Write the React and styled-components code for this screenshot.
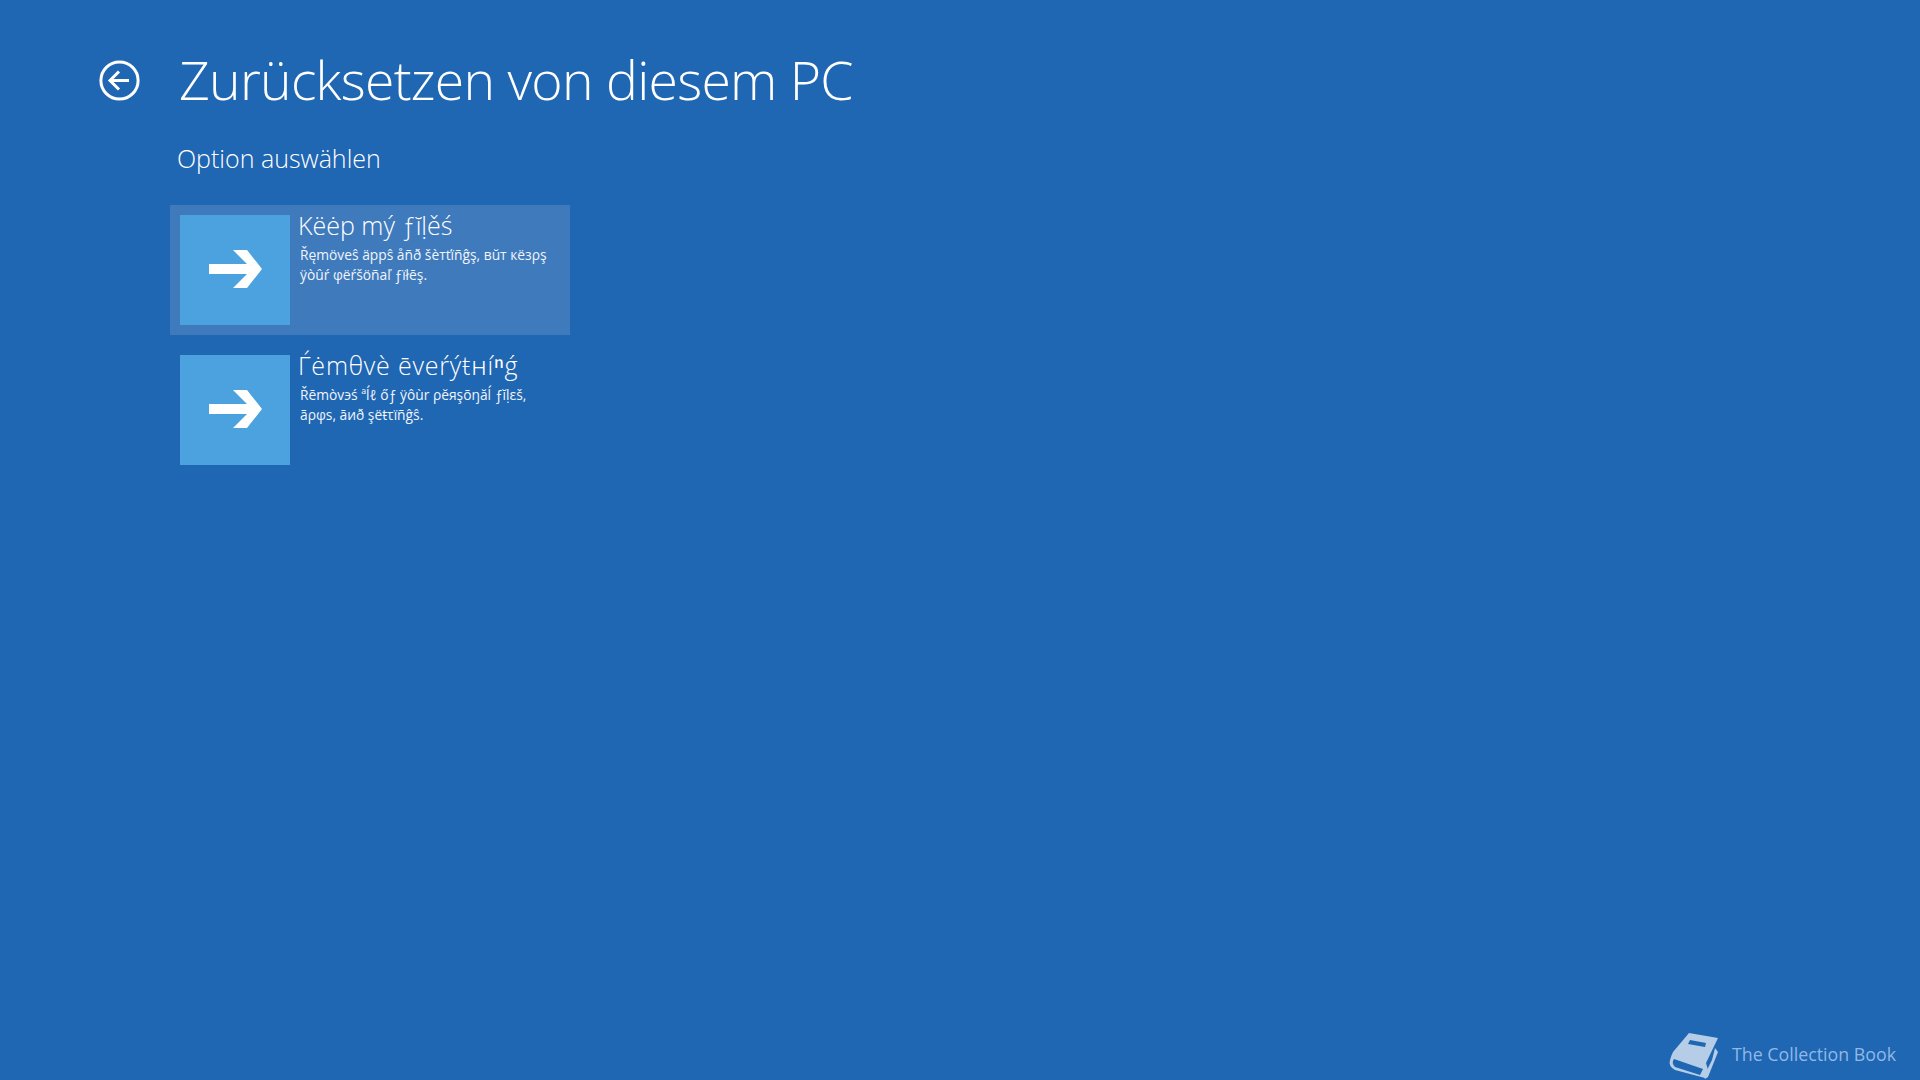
import React from "react";
import styled, { createGlobalStyle } from "styled-components";

const Global = createGlobalStyle`
  html, body { margin: 0; padding: 0; height: 100%; background: #1f66b3; }
  #root { height: 100%; }
  * { box-sizing: border-box; }
`;

const Screen = styled.div`
  position: relative;
  width: 1920px;
  height: 1080px;
  overflow: hidden;
  background: #1f66b3;
  color: #fff;
  font-family: "Open Sans", "Noto Sans", "DejaVu Sans", sans-serif;
  padding: 41px 0 0 170px;
`;

const Header = styled.header`
  display: flex;
  align-items: center;
  height: 78px;
  margin-left: -71px;
  gap: 39px;
`;

const BackButton = styled.div`
  width: 41px;
  height: 41px;
  flex: none;
  svg { display: block; }
`;

const Title = styled.h1`
  margin: 0;
  font-size: 53.5px;
  font-weight: 300;
  line-height: 78px;
  letter-spacing: -0.72px;
  white-space: nowrap;
`;

const Subtitle = styled.h2`
  margin: 22px 0 0 7px;
  font-size: 25px;
  font-weight: 300;
  line-height: 34px;
`;

const Options = styled.div`
  display: flex;
  flex-direction: column;
  gap: 10px;
  margin-top: 30px;
  width: 400px;
`;

const Option = styled.div`
  display: flex;
  height: 130px;
  padding: 10px;
  background: ${(p) => (p.$active ? "#3f7abd" : "transparent")};
`;

const Tile = styled.div`
  width: 110px;
  height: 110px;
  flex: none;
  padding-bottom: 2px;
  background: #4ba2de;
  display: flex;
  align-items: center;
  justify-content: center;
`;

const Body = styled.div`
  margin: -1px 0 0 8px;
  min-width: 0;
`;

const OptionTitle = styled.div`
  font-size: 25px;
  font-weight: 300;
  line-height: 22px;
  letter-spacing: ${(p) => p.$spacing || "0"};
  white-space: nowrap;
`;

const Superscript = styled.span`
  font-family: "DejaVu Sans", sans-serif;
  font-size: 27px;
  font-weight: 300;
  line-height: 0;
`;

const OptionText = styled.div`
  margin: 9px 0 0 2px;
  font-size: 13.8px;
  line-height: 20px;
  color: #f0f5fb;
  white-space: nowrap;
`;

const Brand = styled.div`
  position: absolute;
  right: 24px;
  bottom: 0;
  display: flex;
  align-items: flex-start;
  height: 50px;
  gap: 12px;
  color: #8fb9e6;
  font-size: 17.8px;
  line-height: 24px;
  span { margin-top: 12px; }
  svg { display: block; }
`;

const BackIcon = () => (
  <svg width="41" height="41" viewBox="0 0 41 41" fill="none" stroke="#fff">
    <circle cx="20.5" cy="20.5" r="18.6" strokeWidth="3" />
    <path d="M11.5 20.5H30M20 11.5l-9 9 9 9" strokeWidth="3" />
  </svg>
);

const Arrow = () => (
  <svg width="53" height="38" viewBox="0 0 53 38" fill="#fff">
    <path d="M0 14H38L24 0H38L53 19 38 38H24L38 24H0Z" />
  </svg>
);

const BookIcon = () => (
  <svg width="52" height="50" viewBox="0 0 52 50">
    <path
      fill="#b5cde6"
      fillRule="evenodd"
      d="M21 3 50 8 38 33 40 40 37 48 7 40Q0 36 2 30 3 26 5 22ZM22 10 38 13 37 17 20 14Z"
    />
    <path fill="#1f66b3" d="M6 29 35 39 32 45 7 37Q3 33 6 29Z" />
    <path fill="#b5cde6" d="M47 18 50 22 40 47 37 49 36 46 44 30Z" />
  </svg>
);

const options = [
  {
    active: true,
    title: "Këėp mý ƒĭḷěś",
    lines: ["Řęmövеŝ äppŝ åñð šèтťïñĝş, вŭт кëзρş", "ÿòûŕ φëŕšöñaľ ƒïłēş."],
  },
  {
    title: <>Ѓėmθvè ēvеŕýŧʜí<Superscript>ⁿ</Superscript>ǵ</>,
    spacing: "0.8px",
    lines: ["Řēmòvэś ªĺℓ őƒ ÿôùr ρĕяşōŋăĺ ƒĭḷɛš,", "ãρφs, āиð şëŧτïñĝŝ."],
  },
];

export default function App() {
  return (
    <Screen>
      <Global />
      <Header>
        <BackButton><BackIcon /></BackButton>
        <Title>Zurücksetzen von diesem PC</Title>
      </Header>
      <Subtitle>Option auswählen</Subtitle>
      <Options>
        {options.map((o) => (
          <Option key={o.lines[0]} $active={o.active}>
            <Tile><Arrow /></Tile>
            <Body>
              <OptionTitle $spacing={o.spacing}>{o.title}</OptionTitle>
              <OptionText>
                {o.lines.map((l) => <div key={l}>{l}</div>)}
              </OptionText>
            </Body>
          </Option>
        ))}
      </Options>
      <Brand>
        <BookIcon />
        <span>The Collection Book</span>
      </Brand>
    </Screen>
  );
}
